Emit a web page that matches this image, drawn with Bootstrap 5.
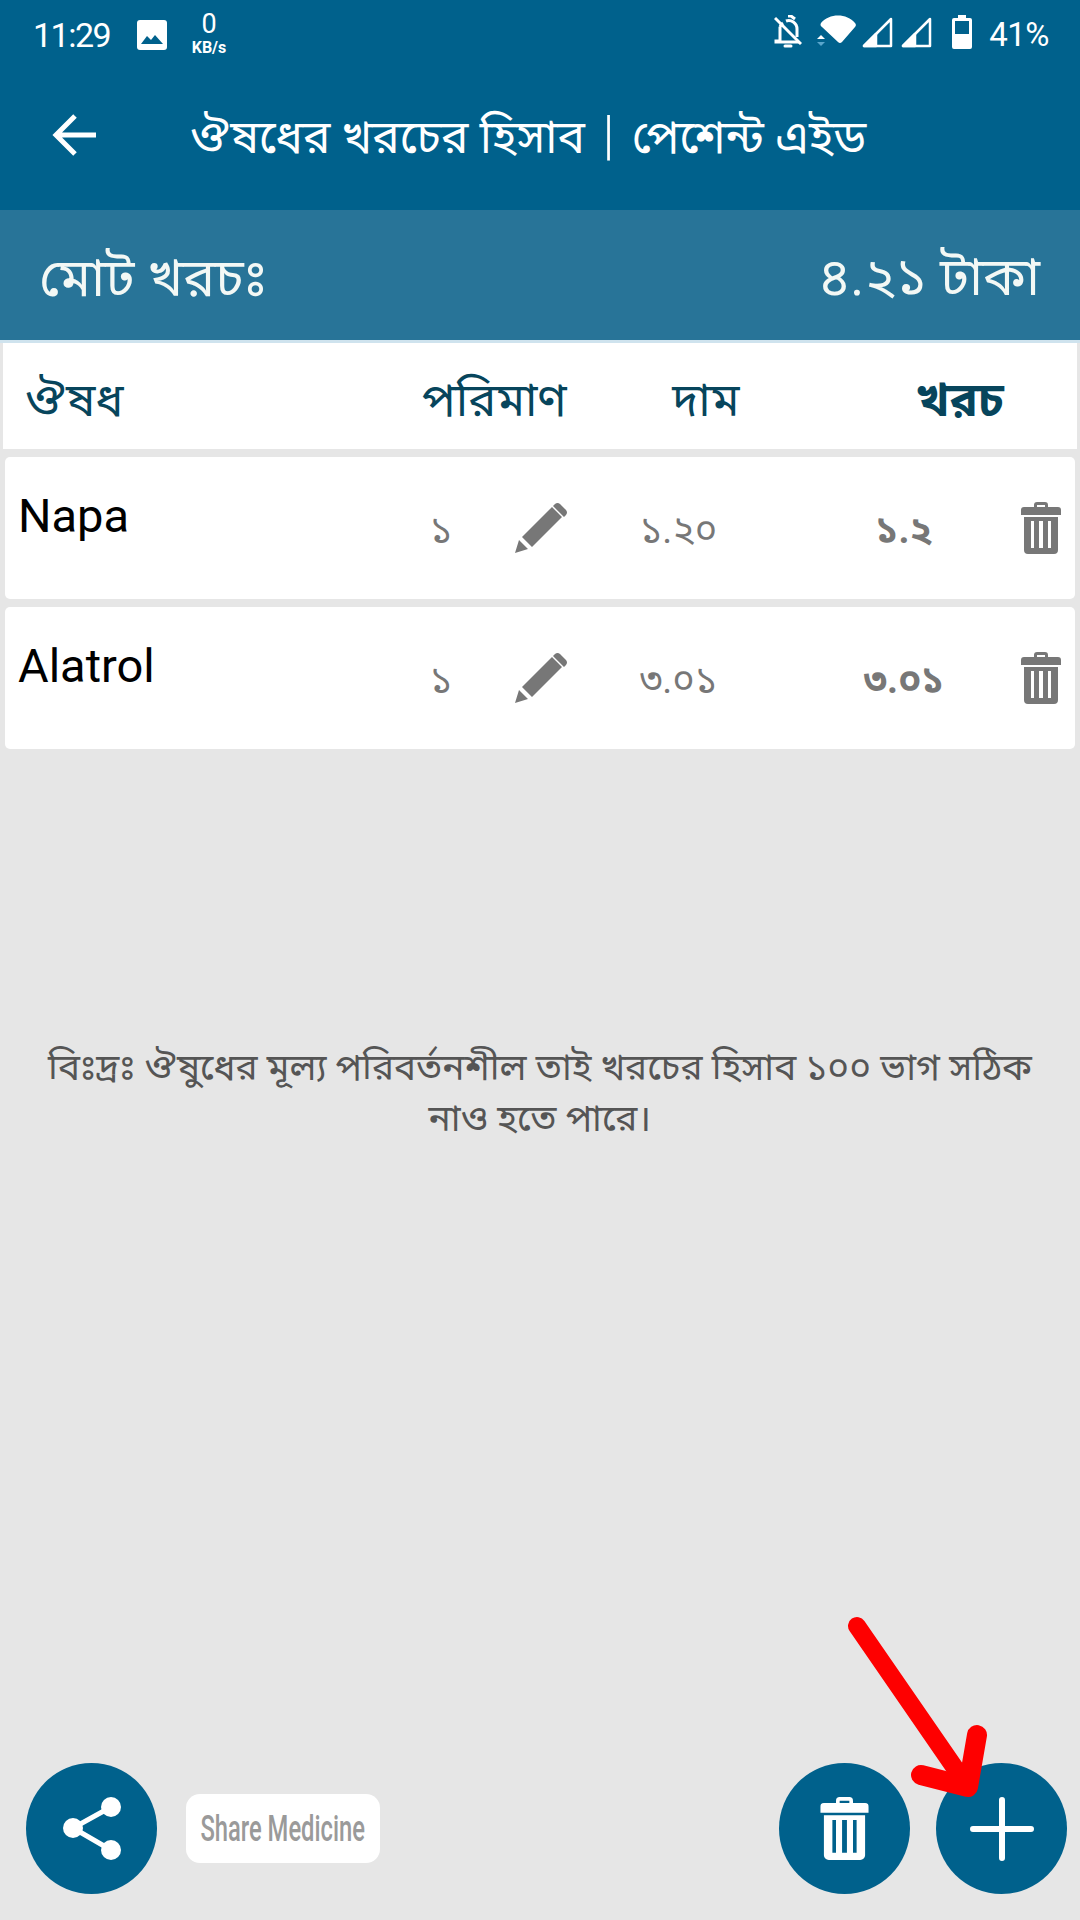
<!DOCTYPE html>
<html lang="bn">
<head>
    <meta charset="UTF-8">
    <meta name="viewport" content="width=device-width, initial-scale=1.0">
    <title>Medicine Cost</title>
    <link rel="stylesheet" href="https://cdn.jsdelivr.net/npm/bootstrap@5.3.0/dist/css/bootstrap.min.css">
    <style>
        body {
            font-family: Roboto, "Noto Sans Bengali", "Lohit Bengali", sans-serif;
            background-color: #e6e6e6;
            margin: 0;
        }
        .screen { position: relative; height: 1920px; width: 1080px; overflow: hidden; }
        .top-area { background-color: #00618c; color: #fff; }
        .status-bar { height: 70px; padding: 0 31px 0 33px; }
        .clock-text { font-size: 34px; letter-spacing: -1.5px; width: 78px; white-space: nowrap; }
        .pic-icon { margin-left: 26px; }
        .net-speed { width: 42px; line-height: 1; margin-left: 21px; text-align: center; font-size: 27px; margin-top: -4px; }
        .net-speed span { display: block; font-size: 16px; font-weight: 700; margin: 2px -5px 0; }
        .status-icons { font-size: 33px; }
        .status-icons svg { margin-top: -7px; }
        .status-icons .st-wifi { margin-left: 15px; }
        .status-icons .st-sig { margin-left: 5px; }
        .status-icons .st-sig2 { margin-left: 7px; }
        .status-icons .st-batt { margin-left: 19px; }
        .batt-text { letter-spacing: -.5px; margin-left: 17px; }
        .app-bar { height: 140px; padding-bottom: 5px; }
        .back-btn { width: 190px; padding-left: 52px; margin-bottom: 5px; }
        .app-title { font-size: 46px; }
        .title-sep { font-weight: 300; font-size: 54px; line-height: 1; margin: 0 6px; }
        .total-bar { height: 133px; background-color: #287498; color: #f3f8f5; padding: 6px 40px 0 39px; border-bottom: 3px solid #cfe3ee; }
        .total-left { font-size: 53.5px; }
        .total-right { font-size: 53px; }
        .head-row { height: 106px; margin: 0 3px; padding-top: 8px; background: #fff; font-size: 47px; color: #07455c; }
        .med-row { height: 142px; margin: 8px 5px 0; background: #fff; border-radius: 5px; color: #777; font-size: 38px; }
        .c-name { width: 381px; padding-left: 13px; }
        .head-name { width: 384px; padding-left: 22px; }
        .med-name { font-size: 47px; color: #000; line-height: 1; margin-top: -25px; }
        .c-qty { width: 110px; padding-top: 4px; text-align: center; }
        .c-edit { width: 90px; margin-top: -5px; text-align: center; }
        .c-price { width: 185px; padding-top: 4px; text-align: center; }
        .c-cost { width: 250px; padding: 4px 0 0 16px; text-align: center; font-weight: 700; }
        .c-del { width: 40px; margin-top: -5px; }
        .head-qty { width: 215px; padding-left: 35px; }
        .head-price { width: 208px; text-align: center; }
        .head-cost { flex: 1; padding-left: 106px; font-weight: 700; }
        .note-text { font-size: 37px; color: #555; line-height: 51px; padding: 0 40px; margin-top: 293px; }
        .bottom-bar { padding: 0 13px 26px 26px; margin-top: auto; }
        .fab { width: 131px; height: 131px; border-radius: 50%; background: #00618c; border: 0; padding: 0; color: #fff; }
        .fab-last { margin-left: 26px; }
        .share-chip { width: 194px; height: 69px; margin-left: 29px; background: #fff; border-radius: 14px; color: #9a9a9a; font-size: 36px; font-weight: 500; white-space: nowrap; }
        .chip-text { display: inline-block; transform: scaleX(.66); }
        .arrow-mark { position: absolute; left: 0; top: 0; pointer-events: none; }
    </style>
</head>
<body>
<div class="screen d-flex flex-column">
    <div class="top-area">
        <div class="status-bar d-flex align-items-center">
            <span class="clock-text">11:29</span>
            <svg class="pic-icon" width="30" height="30" viewBox="0 0 30 30"><rect width="30" height="30" rx="3" fill="#fff"/><path d="M4 24l6-8 4 4 4-5 8 9z" fill="#00618c"/></svg>
            <div class="net-speed">0<span>KB/s</span></div>
            <div class="status-icons ms-auto d-flex align-items-center">
                <svg width="28" height="34" viewBox="0 0 28 34" fill="none" stroke="#fff" stroke-width="3"><path d="M6 12v14H2l0 1h23M6 12a8 8 0 0 1 3-4M12 6c5-2 11 2 11 8v8"/><path d="M1 3l26 26"/><path d="M11 31h6" stroke-width="3" stroke-linecap="round"/><path d="M14 1h3l4 3" stroke-width="3"/></svg>
                <svg class="st-wifi" width="40" height="34" viewBox="0 0 40 34"><path d="M4 8C12-2 30-2 38 8a3 3 0 0 1 0 4L25 27a3 3 0 0 1-4 0L5 12a3 3 0 0 1-1-4z" fill="#fff"/><path d="M4 20l4 4H0z" fill="#fff"/><path d="M0 27h8l-4 4z" fill="#5aa6cc"/></svg>
                <svg class="st-sig" width="32" height="32" viewBox="0 0 32 32" fill="none" stroke="#fff" stroke-width="2.5"><path d="M29 3v27H2z" stroke-linejoin="round"/><path d="M2 30l12-12v12z" fill="#fff" stroke-linejoin="round"/></svg>
                <svg class="st-sig2" width="32" height="32" viewBox="0 0 32 32" fill="none" stroke="#fff" stroke-width="2.5"><path d="M29 3v27H2z" stroke-linejoin="round"/><path d="M2 30l12-12v12z" fill="#fff" stroke-linejoin="round"/></svg>
                <svg class="st-batt" width="20" height="34" viewBox="0 0 20 34"><path d="M6 0h8v3h4a2 2 0 0 1 2 2v27a2 2 0 0 1-2 2H2a2 2 0 0 1-2-2V5a2 2 0 0 1 2-2h4z" fill="#fff"/><rect x="3" y="6" width="14" height="13" fill="#00618c"/></svg>
                <span class="batt-text">41%</span>
            </div>
        </div>
        <div class="app-bar d-flex align-items-center">
            <div class="back-btn">
                <svg width="44" height="42" viewBox="0 0 44 42" fill="none" stroke="#fff" stroke-width="5"><path d="M44 21H4M23 2L4 21l19 19"/></svg>
            </div>
            <div class="app-title">ঔষধের খরচের হিসাব <span class="title-sep">|</span> পেশেন্ট এইড</div>
        </div>
    </div>
    <div class="total-bar d-flex justify-content-between align-items-center">
        <span class="total-left">মোট খরচঃ</span>
        <span class="total-right">৪.২১ টাকা</span>
    </div>
    <div class="head-row d-flex align-items-center">
        <div class="head-name">ঔষধ</div>
        <div class="head-qty">পরিমাণ</div>
        <div class="head-price">দাম</div>
        <div class="head-cost">খরচ</div>
    </div>
    <div class="med-row d-flex align-items-center">
        <div class="c-name"><div class="med-name">Napa</div></div>
        <div class="c-qty">১</div>
        <div class="c-edit"><svg width="52" height="51" viewBox="0 0 52 51"><use href="#pencil"/></svg></div>
        <div class="c-price">১.২০</div>
        <div class="c-cost">১.২</div>
        <div class="c-del"><svg width="40" height="52" viewBox="0 0 40 52"><use href="#bin"/></svg></div>
    </div>
    <div class="med-row d-flex align-items-center">
        <div class="c-name"><div class="med-name">Alatrol</div></div>
        <div class="c-qty">১</div>
        <div class="c-edit"><svg width="52" height="51" viewBox="0 0 52 51"><use href="#pencil"/></svg></div>
        <div class="c-price">৩.০১</div>
        <div class="c-cost">৩.০১</div>
        <div class="c-del"><svg width="40" height="52" viewBox="0 0 40 52"><use href="#bin"/></svg></div>
    </div>
    <p class="note-text text-center mb-0">বিঃদ্রঃ ঔষুধের মূল্য পরিবর্তনশীল তাই খরচের হিসাব ১০০ ভাগ সঠিক নাও হতে পারে।</p>
    <div class="bottom-bar d-flex align-items-center">
        <button class="fab" type="button">
            <svg width="58" height="63" viewBox="0 0 58 63" fill="#fff" stroke="#fff"><path d="M48 10L10 31l38 22" fill="none" stroke-width="5"/><circle cx="48" cy="10" r="10" stroke="none"/><circle cx="10" cy="31" r="10" stroke="none"/><circle cx="48" cy="53" r="10" stroke="none"/></svg>
        </button>
        <div class="share-chip d-flex align-items-center justify-content-center"><span class="chip-text">Share Medicine</span></div>
        <button class="fab ms-auto" type="button">
            <svg width="49" height="63" viewBox="0 0 40 52"><use href="#bin"/></svg>
        </button>
        <button class="fab fab-last" type="button">
            <svg width="64" height="64" viewBox="0 0 64 64" stroke="#fff" stroke-width="6" stroke-linecap="round"><path d="M32 3v58M3 32h58"/></svg>
        </button>
    </div>
    <svg class="arrow-mark" width="1080" height="1920" viewBox="0 0 1080 1920" fill="none" stroke="#fe0000" stroke-width="18" stroke-linecap="round" stroke-linejoin="round"><path d="M857 1626L966 1784"/><path d="M977 1735l-9 52-47-12" stroke-width="20"/></svg>
</div>
<svg width="0" height="0" class="position-absolute">
    <symbol id="pencil" viewBox="0 0 52 51"><path d="M0 51l4-13 9 9zM7 35L37 5l10 10-30 30zM40 2a4 4 0 0 1 5 0l6 6a4 4 0 0 1 0 5l-2 2-11-11z" fill="#777"/></symbol>
    <symbol id="bin" viewBox="0 0 40 52"><path d="M13 5V3a3 3 0 0 1 3-3h8a3 3 0 0 1 3 3v2h10a3 3 0 0 1 3 3v5H0V8a3 3 0 0 1 3-3zm3 0h8V3h-8zM3 15h34v33a4 4 0 0 1-4 4H7a4 4 0 0 1-4-4zm7 4v27h3V19zm8 0v27h4V19zm9 0v27h3V19z" fill="currentColor" fill-rule="evenodd"/></symbol>
</svg>
<script src="https://cdn.jsdelivr.net/npm/bootstrap@5.3.0/dist/js/bootstrap.bundle.min.js"></script>
</body>
</html>
